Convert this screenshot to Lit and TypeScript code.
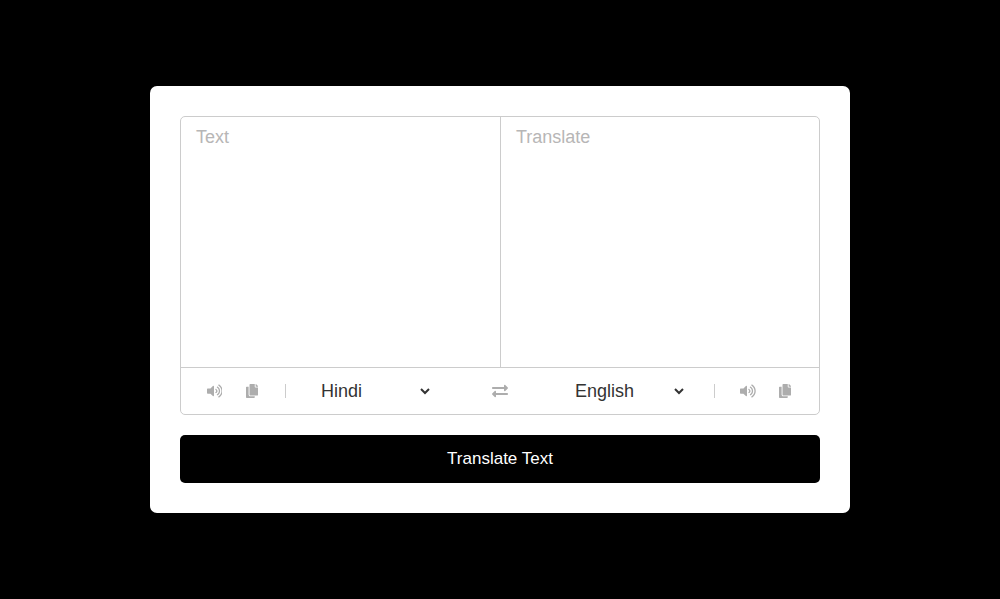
import { LitElement, html, css, svg } from "lit";
import { customElement, state } from "lit/decorators.js";

const VOLUME = svg`<path d="M215.03 71.05L126.06 160H24c-13.26 0-24 10.74-24 24v144c0 13.25 10.74 24 24 24h102.06l88.97 88.95c15.03 15.03 40.97 4.47 40.97-16.97V88.02c0-21.46-25.96-31.98-40.97-16.97zm233.32-51.08c-11.17-7.33-26.18-4.24-33.51 6.95-7.34 11.17-4.22 26.18 6.95 33.51 66.27 43.49 105.82 116.6 105.82 195.58 0 78.98-39.55 152.09-105.82 195.58-11.17 7.32-14.29 22.34-6.95 33.5 7.04 10.71 21.93 14.56 33.51 6.95C528.27 439.58 576 351.33 576 256S528.27 72.43 448.35 19.97zM480 256c0-63.53-32.06-121.94-85.77-156.24-11.19-7.14-26.03-3.82-33.12 7.46s-3.78 26.21 7.41 33.36C408.27 165.97 432 209.47 432 256s-23.73 90.04-63.48 115.42c-11.19 7.14-14.5 22.07-7.41 33.36 6.51 10.36 21.12 15.14 33.12 7.46C447.94 377.94 480 319.53 480 256zm-141.77-76.87c-11.58-6.33-26.19-2.16-32.61 9.45-6.39 11.61-2.16 26.2 9.45 32.61C327.98 228.28 336 241.63 336 256c0 14.38-8.02 27.72-20.92 34.81-11.61 6.41-15.84 21-9.45 32.61 6.43 11.66 21.05 15.8 32.61 9.45 28.23-15.55 45.77-45 45.77-76.88s-17.54-61.32-45.78-76.86z"/>`;
const COPY = svg`<path d="M320 448v40c0 13.255-10.745 24-24 24H24c-13.255 0-24-10.745-24-24V120c0-13.255 10.745-24 24-24h72v296c0 30.879 25.121 56 56 56h168zm0-344V0H152c-13.255 0-24 10.745-24 24v368c0 13.255 10.745 24 24 24h272c13.255 0 24-10.745 24-24V128H344c-13.2 0-24-10.8-24-24zm120.971-31.029L375.029 7.029A24 24 0 0 0 358.059 0H352v96h96v-6.059a24 24 0 0 0-7.029-16.97z"/>`;
const EXCHANGE = svg`<path d="M0 168v-16c0-13.255 10.745-24 24-24h360V80c0-21.367 25.899-32.042 40.971-16.971l80 80c9.372 9.373 9.372 24.569 0 33.941l-80 80C409.956 271.982 384 261.456 384 240v-48H24c-13.255 0-24-10.745-24-24zm488 152H128v-48c0-21.314-25.862-32.08-40.971-16.971l-80 80c-9.372 9.373-9.372 24.569 0 33.941l80 80C102.057 463.997 128 453.437 128 432v-48h360c13.255 0 24-10.745 24-24v-16c0-13.255-10.745-24-24-24z"/>`;

@customElement("app-root")
export class AppRoot extends LitElement {
  static styles = css`
    :host {
      display: flex;
      align-items: center;
      justify-content: center;
      height: 100vh;
      background: #000;
      font-family: "Liberation Sans", Arial, sans-serif;
    }
    * { box-sizing: border-box; }
    .card {
      width: 700px;
      padding: 30px;
      border-radius: 7px;
      background: #fff;
    }
    .wrapper {
      border: 1px solid #ccc;
      border-radius: 5px;
    }
    .inputs {
      display: flex;
      height: 251px;
      border-bottom: 1px solid #ccc;
    }
    textarea {
      flex: 1;
      min-width: 0;
      height: 250px;
      margin: 0;
      padding: 10px 15px;
      border: none;
      outline: none;
      resize: none;
      background: none;
      border-radius: 5px;
      font: 18px "Liberation Sans", Arial, sans-serif;
    }
    textarea::placeholder { color: #b7b6b6; }
    .source {
      flex: 0 0 320px;
      border-right: 1px solid #ccc;
      border-radius: 0;
    }
    .controls {
      display: flex;
      align-items: center;
      justify-content: space-between;
      height: 46px;
      padding: 0 25px;
    }
    .row {
      display: flex;
      align-items: center;
      width: 228px;
    }
    .to { justify-content: flex-end; }
    .icons {
      display: flex;
      align-items: center;
      justify-content: space-between;
      width: 80px;
      height: 14px;
    }
    .from .icons {
      padding: 0 26.8px 0 0.6px;
      border-right: 1px solid #ccc;
    }
    .to .icons {
      padding: 0 2.6px 0 25px;
      border-left: 1px solid #ccc;
    }
    svg {
      display: block;
      height: 14px;
      fill: #adadad;
      cursor: pointer;
    }
    .exchange { height: 16px; }
    select {
      width: 116px;
      height: 22px;
      margin: 0 0 0 31px;
      padding: 0;
      border: none;
      outline: none;
      background: none;
      color: #333;
      font: 18px "Liberation Sans", Arial, sans-serif;
    }
    .to select {
      margin: 0 27px 0 0;
    }
    .submit {
      display: block;
      width: 100%;
      height: 48px;
      margin-top: 20px;
      padding: 0;
      border: none;
      border-radius: 5px;
      background: #000;
      color: #fff;
      font: 17px "Liberation Sans", Arial, sans-serif;
      cursor: pointer;
    }
  `;

  @state() private from = "Hindi";
  @state() private to = "English";

  private swap() {
    [this.from, this.to] = [this.to, this.from];
  }

  private icons() {
    return html`<div class="icons">
      <svg viewBox="0 0 576 512">${VOLUME}</svg>
      <svg viewBox="0 0 448 512">${COPY}</svg>
    </div>`;
  }

  private languages(selected: string) {
    return html`<select>
      ${["English", "Hindi"].map((l) => html`<option ?selected=${l === selected}>${l}</option>`)}
    </select>`;
  }

  render() {
    return html`
      <div class="card">
        <div class="wrapper">
          <div class="inputs">
            <textarea class="source" placeholder="Text"></textarea>
            <textarea readonly placeholder="Translate"></textarea>
          </div>
          <div class="controls">
            <div class="row from">${this.icons()}${this.languages(this.from)}</div>
            <svg class="exchange" viewBox="0 0 512 512" @click=${this.swap}>${EXCHANGE}</svg>
            <div class="row to">${this.languages(this.to)}${this.icons()}</div>
          </div>
        </div>
        <button class="submit">Translate Text</button>
      </div>
    `;
  }
}
